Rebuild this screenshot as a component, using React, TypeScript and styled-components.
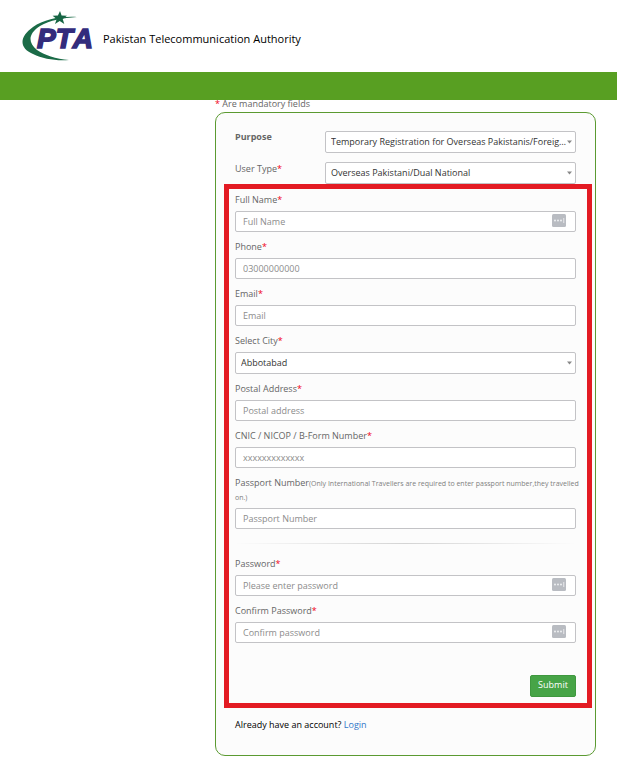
import React from "react";
import styled, { createGlobalStyle } from "styled-components";

const GlobalStyle = createGlobalStyle`
  *, *::before, *::after { box-sizing: border-box; }
  body {
    margin: 0;
    background: #fff;
    color: #666;
    font-family: "Open Sans", "Noto Sans", sans-serif;
    font-size: 9px;
    line-height: 14px;
  }
  input, select, button { font: inherit; }
`;

const Header = styled.header`
  display: flex;
  align-items: center;
  gap: 9px;
  height: 72px;
  padding-left: 22px;
`;

const Logo = styled.svg`
  width: 72px;
  height: 50px;
  flex: none;
`;

const LogoText = styled.text`
  font: italic 700 28px "Liberation Sans", Arial, sans-serif;
  font-kerning: none;
  fill: #332c7c;
  stroke: #332c7c;
  stroke-width: 1.6px;
`;

const SiteName = styled.h1`
  margin: 6px 0 0;
  color: #000;
  font-size: 11px;
  font-weight: 500;
  line-height: 16px;
`;

const NavBar = styled.nav`
  height: 28px;
  background: #589f22;
`;

const Main = styled.main`
  margin: 0 21px 14px 215px;
`;

const Note = styled.p`
  margin: 0;
  height: 12px;
  line-height: 8px;
`;

const Star = styled.span`
  color: #f00018;
`;

const Card = styled.form`
  padding-top: 18px;
  background: #fcfcfc;
  border: 1px solid #5b9a31;
  border-radius: 10px;
`;

const TopRows = styled.div`
  display: grid;
  gap: 9px;
  padding: 0 19px;
`;

const TopRow = styled.div`
  display: grid;
  grid-template-columns: 90px minmax(0, 1fr);
  height: 22px;
`;

const Label = styled.label<{ $bold?: boolean; $wide?: boolean }>`
  display: block;
  margin-right: ${(p) => (p.$wide ? -8 : 0)}px;
  font-weight: ${(p) => (p.$bold ? 700 : 400)};
  line-height: ${(p) => (p.$bold ? 12 : 14)}px;
  padding-bottom: 4px;
`;

const Hint = styled.small`
  font-size: 7px;
  line-height: 8px;
  color: #808080;
`;

const Control = styled.div`
  position: relative;
`;

const fieldColors = `
  display: block;
  width: 100%;
  background: #fff;
  border: 1px solid #c3c3c6;
  border-radius: 2px;
`;

const TextInput = styled.input`
  ${fieldColors}
  height: 21px;
  padding: 0 7px 1px;
  color: #444;
  &::placeholder { color: #8c8c8c; opacity: 1; }
`;

const Select = styled.select`
  ${fieldColors}
  height: 22px;
  padding: 0 6px 0 5px;
  color: #333;
  appearance: none;
  text-overflow: ellipsis;
`;

const Arrow = styled.svg`
  position: absolute;
  top: 9px;
  right: 4px;
  width: 5px;
  height: 4px;
  pointer-events: none;
`;

const KeyIcon = styled.svg`
  position: absolute;
  top: 3px;
  right: 10px;
  width: 14px;
  height: 13px;
`;

const Highlight = styled.section`
  display: flex;
  flex-direction: column;
  gap: 8px;
  margin: 0 3px 0 8px;
  padding: 4px 11px 6px 6px;
  border: 5px solid #e31b23;
`;

const Divider = styled.hr`
  width: 100%;
  height: 1px;
  margin: 6px 0 5px;
  border: 0;
  background: linear-gradient(to right, transparent, #d4d4d4 50%, transparent);
`;

const Submit = styled.button`
  align-self: flex-end;
  margin-top: 24px;
  width: 46px;
  height: 22px;
  padding: 0 0 2px;
  color: #fff;
  background: #47a447;
  border: 1px solid #3f983f;
  border-radius: 2px;
`;

const Footer = styled.p`
  margin: 0;
  padding: 10px 19px 23px;
  color: #000;
`;

const Link = styled.a`
  color: #3276c8;
  text-decoration: none;
`;

function PasswordMark() {
  return (
    <KeyIcon viewBox="0 0 14 13" aria-hidden="true">
      <rect width="14" height="13" rx="1.5" fill="#b9bcc2" />
      <g fill="#f3f4f6">
        <circle cx="3" cy="6.5" r="0.9" />
        <circle cx="6" cy="6.5" r="0.9" />
        <circle cx="9" cy="6.5" r="0.9" />
        <rect x="11.4" y="4" width="0.8" height="5" />
      </g>
    </KeyIcon>
  );
}

type FieldProps = {
  id: string;
  label: string;
  placeholder: string;
  type?: string;
  hint?: string;
  mark?: boolean;
};

function Field({ id, label, placeholder, type = "text", hint, mark }: FieldProps) {
  return (
    <div>
      <Label htmlFor={id} $wide={Boolean(hint)}>
        {label}
        {hint ? <Hint>{hint}</Hint> : <Star>*</Star>}
      </Label>
      <Control>
        <TextInput id={id} type={type} placeholder={placeholder} />
        {mark && <PasswordMark />}
      </Control>
    </div>
  );
}

function DropDown({ id, options }: { id: string; options: string[] }) {
  return (
    <Control>
      <Select id={id}>
        {options.map((o) => (
          <option key={o}>{o}</option>
        ))}
      </Select>
      <Arrow viewBox="0 0 5 4" aria-hidden="true">
        <path d="M0 0.5h5L2.5 3.5z" fill="#888" />
      </Arrow>
    </Control>
  );
}

function PtaLogo() {
  return (
    <Logo viewBox="0 0 72 50" role="img" aria-label="PTA">
      <path
        d="M55 6C40 5 22 8 11 16C-3 26-3 37 11 43C21 48 34 50 47 49C34 48 22 44 15 39C5 31 7 22 18 15C28 9 41 7 55 6Z"
        fill="#1b6b47"
      />
      <path d="M38 0l1.6 4.6 5.4.2-4.3 3.2 1.6 5-4.6-2.9-4.7 2.9 1.7-5-4.1-3.2 5.3-.2z" fill="#176544" />
      <LogoText x="15" y="37">
        PTA
      </LogoText>
    </Logo>
  );
}

export default function App() {
  return (
    <>
      <GlobalStyle />
      <Header>
        <PtaLogo />
        <SiteName>Pakistan Telecommunication Authority</SiteName>
      </Header>
      <NavBar aria-label="Main" />
      <Main>
        <Note>
          <Star>*</Star> Are mandatory fields
        </Note>
        <Card onSubmit={(e: React.FormEvent) => e.preventDefault()}>
          <TopRows>
            <TopRow>
              <Label htmlFor="purpose" $bold>
                Purpose
              </Label>
              <DropDown id="purpose" options={["Temporary Registration for Overseas Pakistanis/Foreigners"]} />
            </TopRow>
            <TopRow>
              <Label htmlFor="userType">
                User Type<Star>*</Star>
              </Label>
              <DropDown id="userType" options={["Overseas Pakistani/Dual National"]} />
            </TopRow>
          </TopRows>
          <Highlight>
            <Field id="fullName" label="Full Name" placeholder="Full Name" mark />
            <Field id="phone" label="Phone" placeholder="03000000000" type="tel" />
            <Field id="email" label="Email" placeholder="Email" type="email" />
            <div>
              <Label htmlFor="city">
                Select City<Star>*</Star>
              </Label>
              <DropDown id="city" options={["Abbotabad"]} />
            </div>
            <Field id="address" label="Postal Address" placeholder="Postal address" />
            <Field id="cnic" label="CNIC / NICOP / B-Form Number" placeholder="xxxxxxxxxxxxx" />
            <Field
              id="passport"
              label="Passport Number"
              placeholder="Passport Number"
              hint="(Only International Travellers are required to enter passport number,they travelled on.)"
            />
            <Divider />
            <Field id="password" label="Password" placeholder="Please enter password" type="password" mark />
            <Field id="confirm" label="Confirm Password" placeholder="Confirm password" type="password" mark />
            <Submit type="submit">Submit</Submit>
          </Highlight>
          <Footer>
            Already have an account? <Link href="#login">Login</Link>
          </Footer>
        </Card>
      </Main>
    </>
  );
}
